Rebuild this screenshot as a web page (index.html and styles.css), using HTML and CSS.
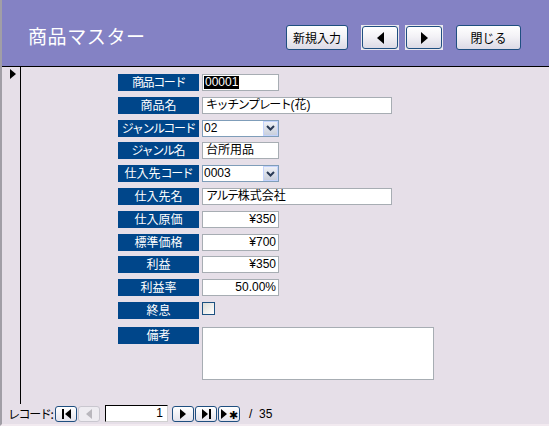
FILE: index.html
```html
<!DOCTYPE html>
<html lang="ja">
<head>
<meta charset="utf-8">
<title>商品マスター</title>
<link rel="stylesheet" href="styles.css">
</head>
<body>
<div class="page">
  <header class="header">
    <h1 class="title">商品マスター</h1>
    <div class="actions">
      <button class="btn btn-new">新規入力</button>
      <span class="btn-wrap"><button class="btn btn-arrow"><span class="tri tri-left"></span></button></span>
      <span class="btn-wrap"><button class="btn btn-arrow"><span class="tri tri-right"></span></button></span>
      <button class="btn btn-close">閉じる</button>
    </div>
  </header>
  <main class="detail">
    <div class="selector"><span class="current"></span></div>
    <div class="form">
      <div class="label"><span class="kana">商品コード</span></div>
      <div class="field w-s"><span class="sel">00001</span></div>

      <div class="label">商品名</div>
      <div class="field w-l"><span class="kana">キッチンプレート</span>(花)</div>

      <div class="label"><span class="kana">ジャンルコード</span></div>
      <div class="field combo w-s">02<span class="drop"><svg width="9" height="6" viewBox="0 0 9 6"><path d="M1 1 L4.5 4.5 L8 1" fill="none" stroke="#2a3a55" stroke-width="2"/></svg></span></div>

      <div class="label"><span class="kana">ジャンル</span>名</div>
      <div class="field w-s">台所用品</div>

      <div class="label">仕入先<span class="kana">コード</span></div>
      <div class="field combo w-s">0003<span class="drop"><svg width="9" height="6" viewBox="0 0 9 6"><path d="M1 1 L4.5 4.5 L8 1" fill="none" stroke="#2a3a55" stroke-width="2"/></svg></span></div>

      <div class="label">仕入先名</div>
      <div class="field w-l"><span class="kana">アルテ</span>株式会社</div>

      <div class="label">仕入原価</div>
      <div class="field w-s num">¥350</div>

      <div class="label">標準価格</div>
      <div class="field w-s num">¥700</div>

      <div class="label">利益</div>
      <div class="field w-s num">¥350</div>

      <div class="label">利益率</div>
      <div class="field w-s num">50.00%</div>

      <div class="label">終息</div>
      <div class="cell"><span class="check"></span></div>

      <div class="label label-note">備考</div>
      <div class="field note"></div>
    </div>
  </main>
  <footer class="nav">
    <span class="nav-label"><span class="kana">レコード</span>:</span>
    <span class="nbtn"><span class="bar"></span><span class="tri tri-left small"></span></span>
    <span class="nbtn disabled"><span class="tri tri-left small grey"></span></span>
    <span class="recno">1</span>
    <span class="nbtn"><span class="tri tri-right small"></span></span>
    <span class="nbtn"><span class="tri tri-right small"></span><span class="bar"></span></span>
    <span class="nbtn"><span class="tri tri-right small"></span><span class="star">✱</span></span>
    <span class="total">/&nbsp; 35</span>
  </footer>
</div>
</body>
</html>
```
FILE: styles.css
```css
html, body {
  margin: 0;
  padding: 0;
}
body {
  width: 549px;
  height: 426px;
  overflow: hidden;
  background: #e6dfe8;
  font-family: "Liberation Sans", "Noto Sans CJK JP", sans-serif;
  font-size: 12px;
  color: #000;
}
.page {
  width: 547px;
  height: 424px;
  border-left: 2px solid #a19ea6;
  border-bottom: 2px solid #f2eaf0;
  display: flex;
  flex-direction: column;
}
.header {
  height: 66px;
  background: #8482c4;
  border-bottom: 1px solid #000;
  display: flex;
  align-items: flex-start;
}
.title {
  margin: 0;
  padding: 24px 0 0 26px;
  font-family: "Noto Sans CJK JP", sans-serif;
  font-weight: normal;
  font-size: 19px;
  letter-spacing: 0.6px;
  line-height: 24px;
  color: #fff;
}
.actions {
  margin-left: auto;
  margin-right: 28px;
  padding-top: 25px;
  display: flex;
  align-items: center;
}
.btn {
  height: 25px;
  margin: 0;
  padding: 0;
  border: 1px solid #1f4f80;
  border-radius: 3px;
  background: linear-gradient(#ffffff, #f3f2f6 45%, #dcdae6);
  font-family: "Noto Sans CJK JP", sans-serif;
  font-size: 12px;
  line-height: 20px;
  color: #000;
  display: flex;
  align-items: center;
  justify-content: center;
}
.btn-new {
  width: 62px;
}
.btn-wrap {
  display: flex;
  padding: 1px;
  background: #e9e8ee;
  margin-left: 13px;
}
.btn-wrap + .btn-wrap {
  margin-left: 6px;
}
.btn-arrow {
  width: 36px;
  height: 23px;
}
.btn-close {
  width: 65px;
  margin-left: 13px;
}
.tri {
  display: inline-block;
  width: 0;
  height: 0;
  border-top: 6px solid transparent;
  border-bottom: 6px solid transparent;
}
.tri-left {
  border-right: 7px solid #000;
}
.tri-right {
  border-left: 7px solid #000;
}
.tri.small {
  border-top-width: 5px;
  border-bottom-width: 5px;
}
.tri-left.small {
  border-right-width: 6px;
}
.tri-right.small {
  border-left-width: 6px;
}
.tri.grey {
  border-right-color: #b9b7bd;
}

.kana {
  letter-spacing: -1.4px;
}

.detail {
  height: 337px;
  display: flex;
}
.selector {
  width: 18px;
  border-right: 1px solid #000;
}
.current {
  display: block;
  width: 0;
  height: 0;
  margin: 2px 0 0 8px;
  border-left: 6px solid #000;
  border-top: 5px solid transparent;
  border-bottom: 5px solid transparent;
}
.form {
  padding: 7px 0 0 97px;
  display: grid;
  grid-template-columns: 81px auto;
  grid-auto-rows: 17px;
  column-gap: 3px;
  row-gap: 5.8px;
  align-content: start;
  justify-items: start;
}
.label {
  width: 81px;
  height: 17px;
  background: #00468a;
  color: #fff;
  font-family: "Noto Sans CJK JP", sans-serif;
  font-size: 12px;
  line-height: 16px;
  text-align: center;
  white-space: nowrap;
  overflow: hidden;
}
.label-note {
  margin-top: 2px;
}
.field {
  box-sizing: border-box;
  height: 17px;
  background: #fff;
  border: 1px solid #a7adb3;
  padding: 0 2px 0 3px;
  line-height: 14px;
  font-size: 12px;
  white-space: nowrap;
  position: relative;
}
.w-s {
  width: 77px;
}
.w-l {
  width: 190px;
}
.num {
  text-align: right;
}
.sel {
  background: #000;
  color: #fff;
  display: inline-block;
  line-height: 13px;
  margin-left: -2px;
  padding: 0 1px;
}
.combo {
  border-color: #7f9db9;
  padding-left: 1px;
}
.drop {
  position: absolute;
  right: 0;
  top: 0;
  width: 15px;
  height: 15px;
  box-sizing: border-box;
  border: 1px solid #c3d3fd;
  background: linear-gradient(#eef0f6, #c9cfdc);
  display: flex;
  align-items: center;
  justify-content: center;
}
.cell {
  height: 17px;
}
.check {
  display: block;
  box-sizing: border-box;
  width: 13px;
  height: 13px;
  border: 1px solid #1c5180;
  background: linear-gradient(135deg, #dcdcd6, #ffffff);
}
.note {
  width: 232px;
  height: 53px;
  margin-top: 2px;
  grid-row: span 3;
}

.nav {
  height: 19px;
  display: flex;
  align-items: center;
  padding-left: 6px;
  font-family: "Noto Sans CJK JP", sans-serif;
  font-size: 12px;
}
.nav-label {
  width: 47px;
  white-space: nowrap;
  line-height: 14px;
}
.nbtn {
  box-sizing: border-box;
  width: 22px;
  height: 16px;
  margin-right: 1px;
  border: 1px solid #1f4f80;
  border-radius: 3px;
  background: linear-gradient(#ffffff, #e4e3ec);
  display: flex;
  align-items: center;
  justify-content: center;
  gap: 1px;
}
.nbtn.disabled {
  border-color: #c9c7cf;
  background: #eeecf1;
  margin-right: 5px;
}
.bar {
  width: 2px;
  height: 10px;
  background: #000;
}
.star {
  font-size: 11px;
  line-height: 12px;
  margin-left: 1px;
}
.recno {
  box-sizing: border-box;
  width: 63px;
  height: 17px;
  margin-right: 4px;
  background: #fff;
  border: 1px solid #000;
  border-right-color: #d0d0d0;
  border-bottom-color: #d0d0d0;
  font-family: "Liberation Sans", sans-serif;
  text-align: right;
  padding-right: 4px;
  line-height: 15px;
}
.total {
  margin-left: 8px;
  font-family: "Liberation Sans", sans-serif;
}
```
